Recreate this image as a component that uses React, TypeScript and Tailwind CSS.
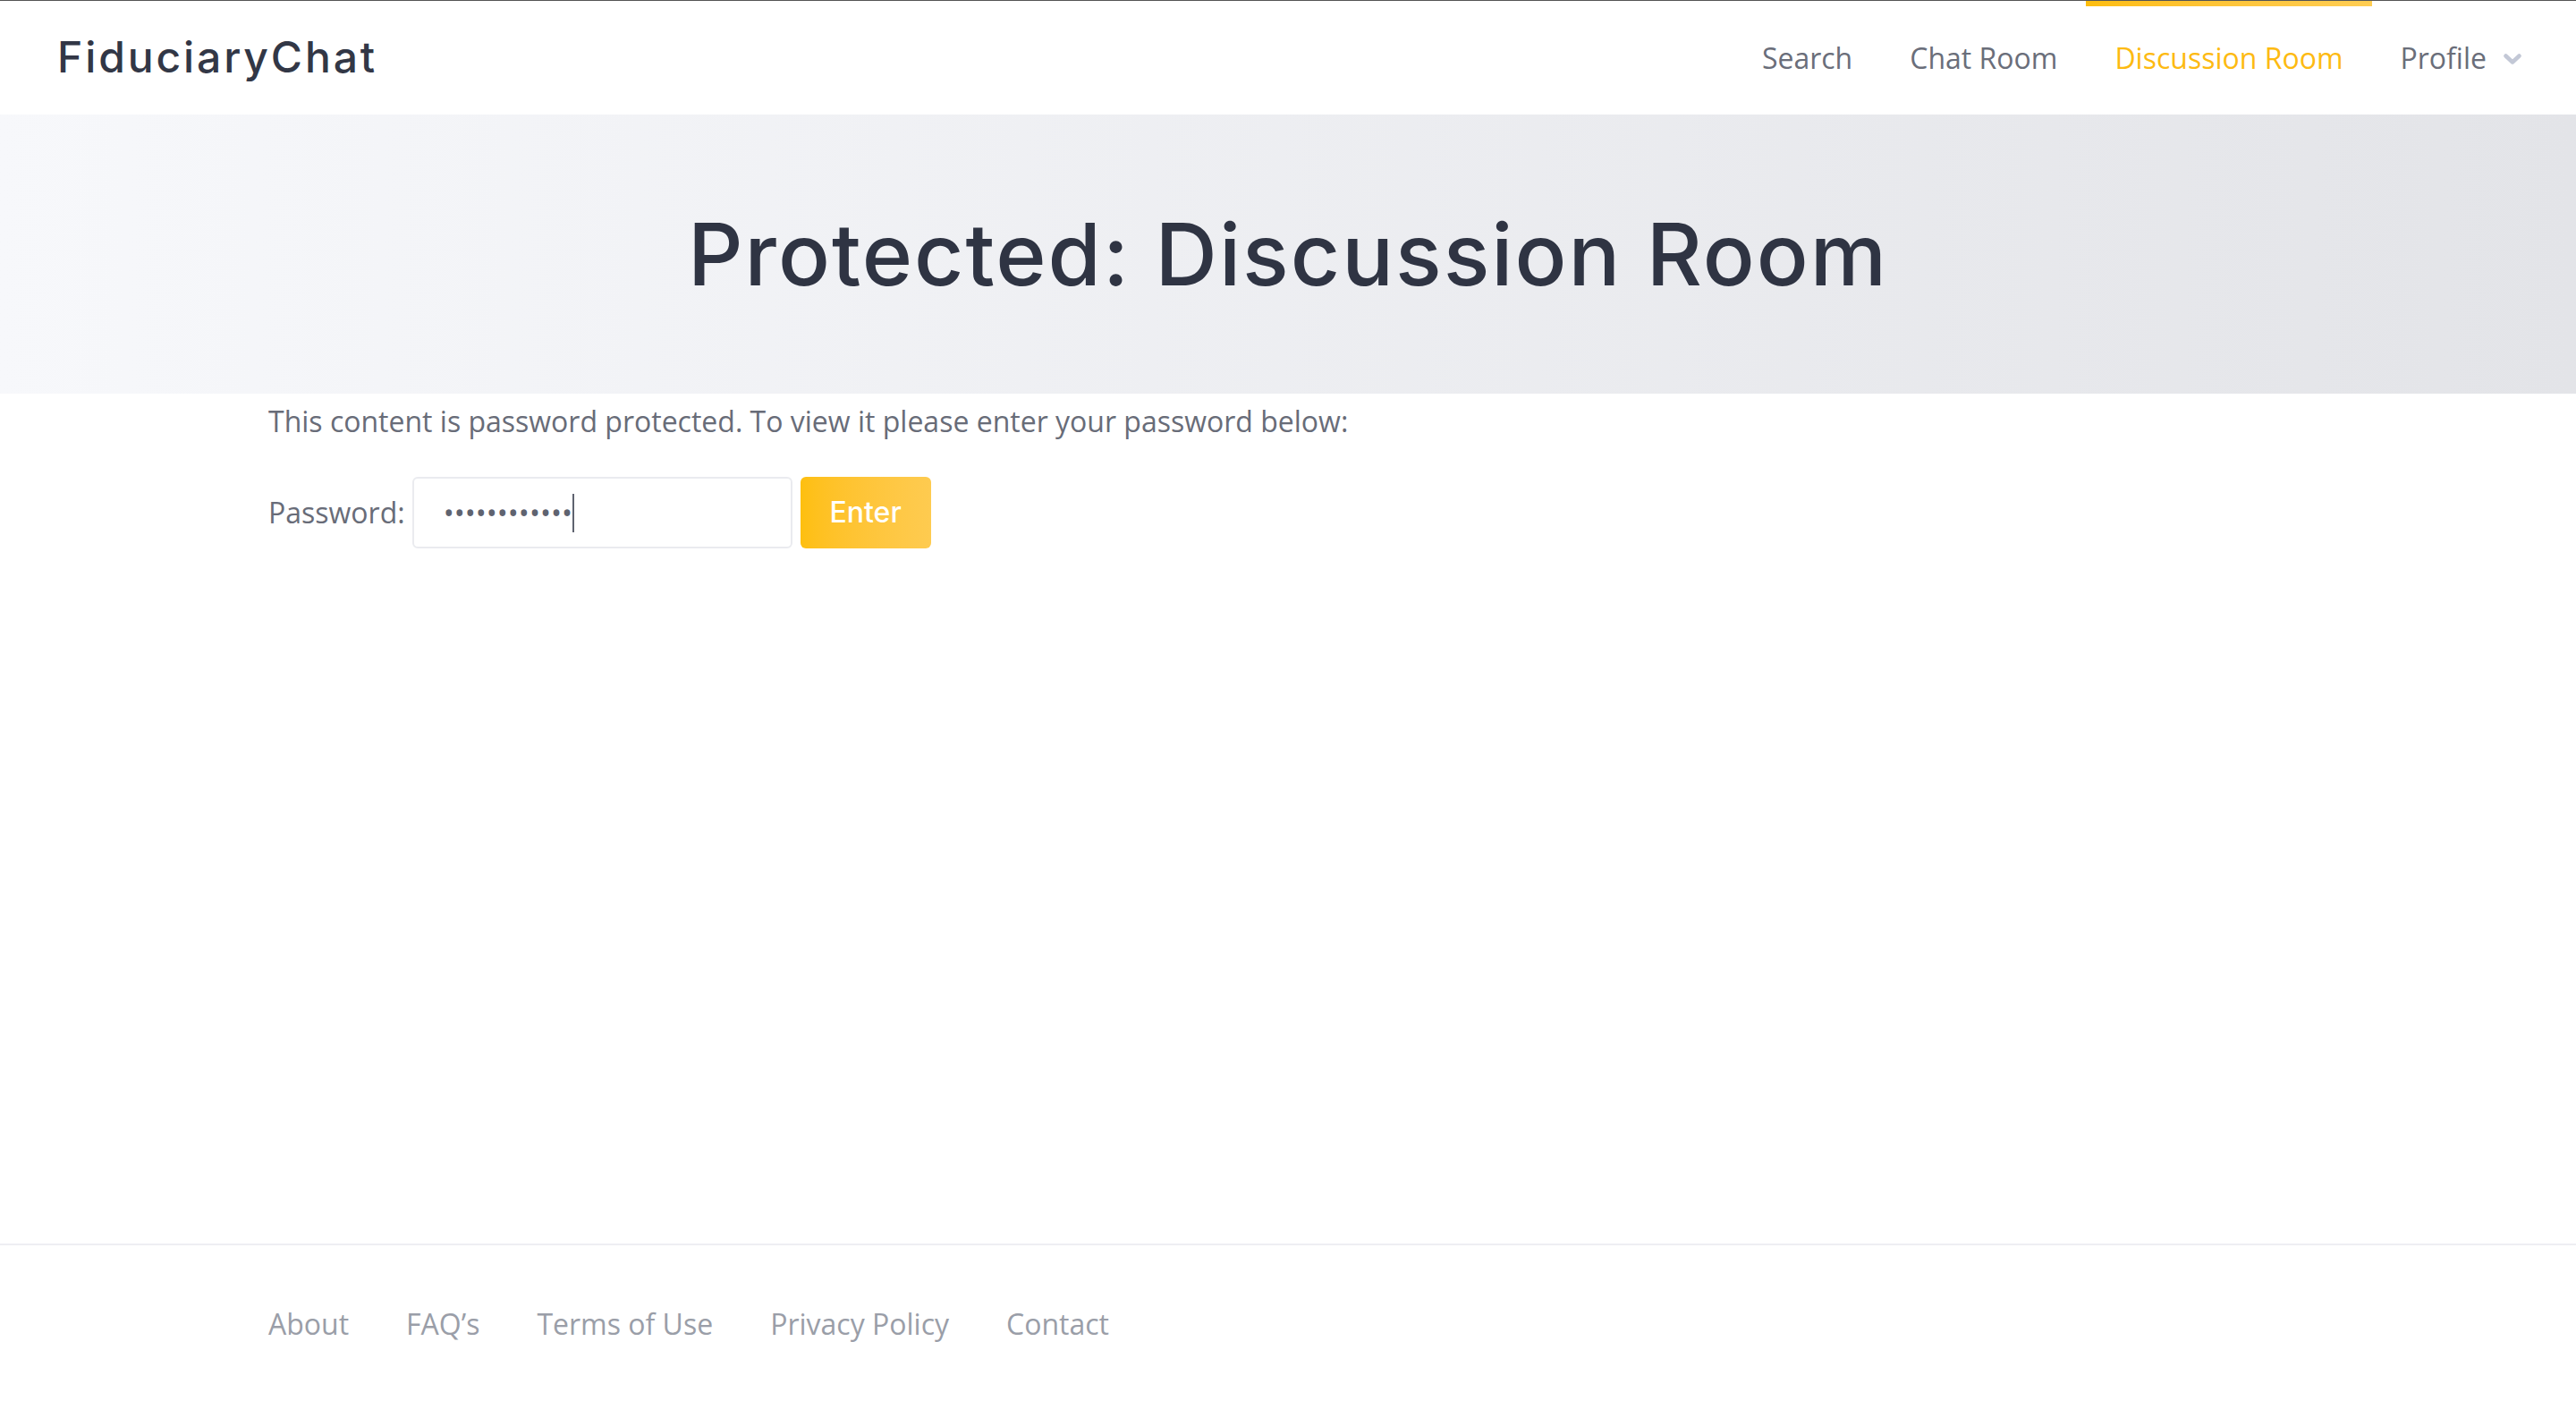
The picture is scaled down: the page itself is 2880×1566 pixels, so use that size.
import React from "react";

const sans = "font-['Open_Sans',_'Noto_Sans',_sans-serif]";
const display = "font-['Inter',_'Noto_Sans',_sans-serif]";

function Chevron() {
  return (
    <svg width="20" height="12" viewBox="0 0 20 12" className="ml-[19px] mt-[2px]">
      <polyline points="2.5,2.5 10,9.5 17.5,2.5" fill="none" stroke="#C3C8D6" strokeWidth="4.5" strokeLinecap="round" strokeLinejoin="round" />
    </svg>
  );
}

function NavItem({ label, active, chevron }: { label: string; active?: boolean; chevron?: boolean }) {
  return (
    <a className={`relative flex h-full items-center px-[32px] text-[32px] ${active ? "text-[#FDBA12]" : "text-[#6A6E7A]"}`}>
      {active && <span className="absolute left-0 right-0 top-0 h-[6px] bg-gradient-to-r from-[#FDBD0C] to-[#FFCD52]" />}
      <span>{label}</span>
      {chevron && <Chevron />}
    </a>
  );
}

export default function App() {
  return (
    <div className={`flex min-h-[1566px] flex-col bg-white ${sans}`}>
      <header className="flex h-[128px] items-stretch justify-between border-t border-[#555555] bg-white pl-[64px] pr-[29px]">
        <div className={`flex items-center pb-[2px] text-[48px] font-medium tracking-[0.06em] text-[#323746] ${display}`}>
          FiduciaryChat
        </div>
        <nav className="flex h-full items-stretch">
          <NavItem label="Search" />
          <NavItem label="Chat Room" />
          <NavItem label="Discussion Room" active />
          <NavItem label="Profile" chevron />
        </nav>
      </header>

      <section className="flex h-[312px] items-center justify-center bg-gradient-to-r from-[#F7F8FB] to-[#E3E4E8]">
        <h1 className={`text-[96px] font-medium leading-none tracking-[2px] text-[#2F3443] ${display}`}>
          Protected: Discussion Room
        </h1>
      </section>

      <main className="flex-1">
        <div className="mx-auto w-[2280px]">
          <p className="mt-[7px] text-[32px] leading-[48px] text-[#686C78]">
            This content is password protected. To view it please enter your password below:
          </p>
          <form className="mt-[38px] flex items-center">
            <label className="text-[32px] leading-[48px] text-[#686C78]">Password:</label>
            <div className="ml-[8px] flex h-[80px] w-[425px] items-center rounded-[6px] border-2 border-[#EAEBEF] bg-white pl-[33px]">
              <span className="text-[32px] leading-none tracking-[0px] text-[#5F6370]">••••••••••••</span>
              <span className="h-[43px] w-[2px] bg-[#5F6370]" />
            </div>
            <button
              type="button"
              className={`ml-[9px] h-[80px] w-[146px] rounded-[6px] bg-gradient-to-r from-[#FEBF0E] to-[#FECB50] text-[32px] font-medium text-white ${display}`}
            >
              Enter
            </button>
          </form>
        </div>
      </main>

      <footer className="border-t-2 border-[#EEEEF3] pt-[64px] pb-[62px]">
        <div className="mx-auto flex w-[2280px] gap-[64px] text-[32px] leading-[48px] text-[#9A9EA8]">
          <a>About</a>
          <a>FAQ’s</a>
          <a>Terms of Use</a>
          <a>Privacy Policy</a>
          <a>Contact</a>
        </div>
      </footer>
    </div>
  );
}
